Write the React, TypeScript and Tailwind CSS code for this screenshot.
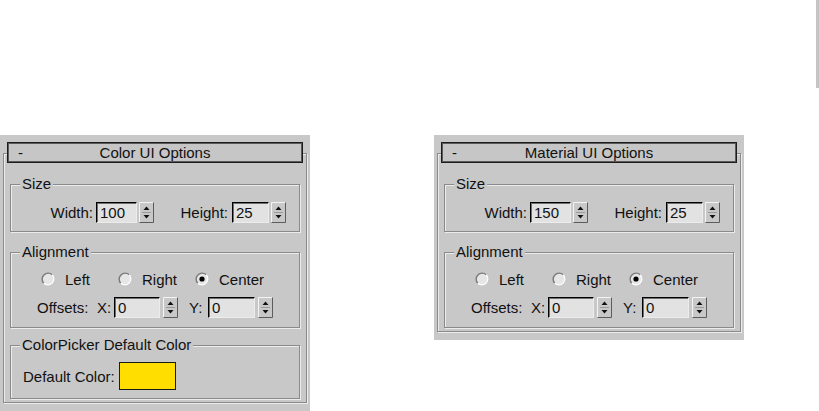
const FONT = "font-['Liberation_Sans',Arial,sans-serif]";

const Spinner = () => (
  <svg width="15" height="21" viewBox="0 0 15 21" className="shrink-0">
    <rect x="0" y="0" width="15" height="21" fill="#c8c8c8" />
    <path d="M0.5 20.5 V0.5 H14.5" stroke="#f4f4f4" fill="none" />
    <path d="M0.5 20.5 H14.5 V0.5" stroke="#5c5c5c" fill="none" />
    <polygon points="4.5,8 10.5,8 7.5,4.5" fill="#111" />
    <line x1="3" y1="10.5" x2="12" y2="10.5" stroke="#9a9a9a" />
    <polygon points="4.5,13 10.5,13 7.5,16.5" fill="#111" />
  </svg>
);

const Field = ({ value, w }: { value: string; w: string }) => (
  <div
    className={`${w} h-[21px] shrink-0 flex items-center pl-[3px] bg-[#e2e2e2] border border-t-black border-l-black border-r-[#ececec] border-b-[#ececec] shadow-[inset_1px_1px_0_#6e6e6e] leading-[17px]`}
  >
    {value}
  </div>
);

const Radio = ({ checked }: { checked?: boolean }) => (
  <svg width="14" height="14" viewBox="0 0 14 14" className="shrink-0">
    <circle cx="7" cy="7" r="6" fill="#e6e6e6" />
    <path d="M2.76 11.24 A6 6 0 0 1 11.24 2.76" stroke="#7a7a7a" strokeWidth="1.4" fill="none" />
    <path d="M11.24 2.76 A6 6 0 0 1 2.76 11.24" stroke="#ffffff" strokeWidth="1.2" fill="none" />
    {checked && <circle cx="7" cy="7" r="2.6" fill="#000" />}
  </svg>
);

const Group = ({
  title,
  className,
  children,
}: {
  title: string;
  className: string;
  children: React.ReactNode;
}) => (
  <div
    className={`mx-[6px] border border-[#8a8a8a] shadow-[inset_1px_1px_0_#ececec,1px_1px_0_#ececec] ${className}`}
  >
    <div className="-mt-[9px] ml-[9px] w-fit px-[2px] bg-[#c8c8c8] leading-4">
      {title}
    </div>
    {children}
  </div>
);

const Rollout = ({
  title,
  width,
  colorGroup,
}: {
  title: string;
  width: string;
  colorGroup?: boolean;
}) => (
  <div className="w-[310px] bg-[#c8c8c8] pt-[18px] pb-[8px] px-[3px] shrink-0">
    <div className="border border-[#8a8a8a] shadow-[inset_1px_1px_0_#ececec,1px_1px_0_#ececec] pb-[3px]">
      <div className="-mt-[12px] mx-[3px] h-[21px] border border-[#1c1c1c] shadow-[inset_1px_1px_0_#5a5a5a,inset_-1px_-1px_0_#5a5a5a] bg-[#c6c6c6] grid grid-cols-[1fr_auto_1fr] items-center leading-[17px]">
        <span className="pl-[10px]">-</span>
        <span>{title}</span>
        <span />
      </div>

      <Group title="Size" className="mt-[21px] pb-[8px]">
        <div className="mt-[10px] pl-[36px] flex items-center leading-[17px]">
          <span className="w-[46px] text-right">Width:</span>
          <div className="ml-[3px]">
            <Field value={width} w="w-[41px]" />
          </div>
          <div className="ml-[2px]">
            <Spinner />
          </div>
          <span className="ml-[22px] w-[52px] text-right">Height:</span>
          <div className="ml-[4px]">
            <Field value="25" w="w-[37px]" />
          </div>
          <div className="ml-[2px]">
            <Spinner />
          </div>
        </div>
      </Group>

      <Group title="Alignment" className="mt-[20px] pb-[9px]">
        <div className="mt-[10px] h-[18px] pl-[30px] flex items-center leading-[17px]">
          <Radio />
          <span className="ml-[10px] w-[53px]">Left</span>
          <Radio />
          <span className="ml-[10px] w-[53px]">Right</span>
          <Radio checked />
          <span className="ml-[10px]">Center</span>
        </div>
        <div className="mt-[9px] pl-[26px] flex items-center leading-[17px]">
          <span className="w-[60px]">Offsets:</span>
          <span className="w-[17px]">X:</span>
          <Field value="0" w="w-[46px]" />
          <div className="ml-[3px]">
            <Spinner />
          </div>
          <span className="ml-[11px] w-[19px]">Y:</span>
          <Field value="0" w="w-[47px]" />
          <div className="ml-[3px]">
            <Spinner />
          </div>
        </div>
      </Group>

      {colorGroup && (
        <Group title="ColorPicker Default Color" className="mt-[17px] pb-[8px]">
          <div className="mt-[9px] pl-[12px] flex items-center leading-[17px]">
            <span className="w-[96px]">Default Color:</span>
            <div className="w-[57px] h-[28px] bg-[#ffde00] border border-[#1a1a1a]" />
          </div>
        </Group>
      )}
    </div>
  </div>
);

export default function App() {
  return (
    <div
      className={`w-[819px] h-[411px] bg-white overflow-hidden flex flex-col text-[15px] text-[#111] ${FONT}`}
    >
      <div className="flex justify-end">
        <div className="w-[3px] h-[88px] bg-[#c4c4c4]" />
      </div>
      <div className="mt-[47px] flex items-start gap-[124px]">
        <Rollout title="Color UI Options" width="100" colorGroup />
        <Rollout title="Material UI Options" width="150" />
      </div>
    </div>
  );
}
